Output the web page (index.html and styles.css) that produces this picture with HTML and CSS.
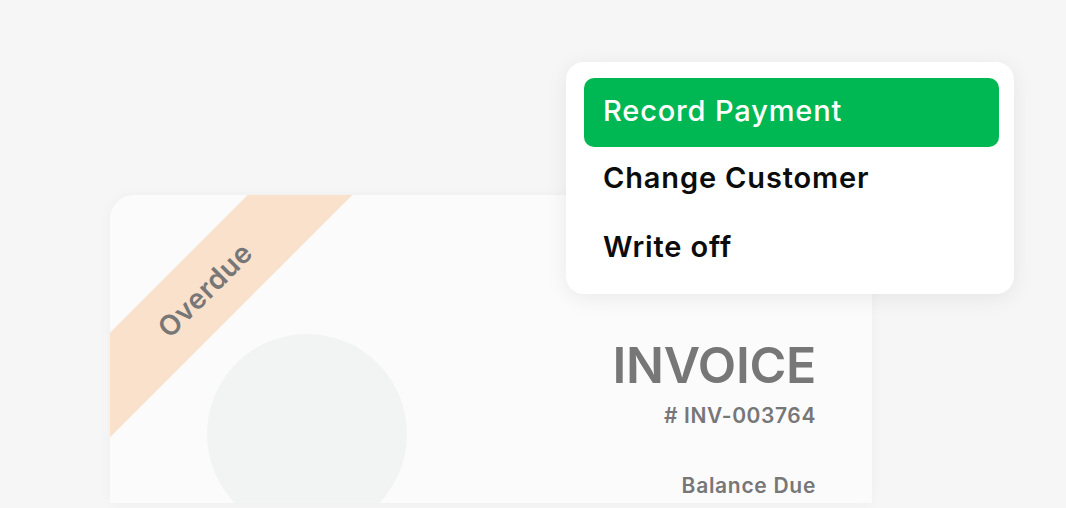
FILE: index.html
```html
<!DOCTYPE html>
<html>
<head>
<meta charset="utf-8">
<link rel="stylesheet" href="styles.css">
</head>
<body>
<div class="stage">
  <div class="card">
    <div class="ribbon"><span>Overdue</span></div>
    <div class="card-body">
      <div class="logo-circle"></div>
      <div class="invoice-meta">
        <div class="invoice-title">INVOICE</div>
        <div class="invoice-number"># INV-003764</div>
        <div class="balance-label">Balance Due</div>
      </div>
    </div>
  </div>
  <div class="menu">
    <div class="menu-item active">Record Payment</div>
    <div class="menu-item">Change Customer</div>
    <div class="menu-item">Write off</div>
  </div>
</div>
</body>
</html>
```
FILE: styles.css
```css
* { box-sizing: border-box; }
html, body {
  margin: 0;
  padding: 0;
  background: #f6f6f6;
}
body {
  width: 1066px;
  height: 508px;
  overflow: hidden;
  font-family: "Inter", "Noto Sans", sans-serif;
}
.stage {
  position: relative;
  width: 1066px;
  height: 508px;
  padding: 195px 0 0 110px;
}
.card {
  position: relative;
  width: 762px;
  height: 308px;
  background: #fbfbfb;
  border-radius: 24px 24px 0 0;
  overflow: hidden;
  box-shadow: 0 0 14px rgba(0, 0, 0, 0.035);
}
.ribbon {
  position: absolute;
  left: -155px;
  top: 58px;
  width: 500px;
  height: 74px;
  background: #f9e1cc;
  transform: rotate(-45deg);
  display: flex;
  align-items: center;
  justify-content: center;
}
.ribbon span {
  color: #777777;
  font-weight: 600;
  font-size: 28px;
  letter-spacing: 0.6px;
}
.card-body {
  display: flex;
  justify-content: space-between;
  padding: 139px 56px 0 97px;
}
.logo-circle {
  width: 200px;
  height: 200px;
  border-radius: 50%;
  background: #f2f3f3;
  flex: none;
}
.invoice-meta {
  display: flex;
  flex-direction: column;
  align-items: flex-end;
  color: #777777;
  padding-top: 1px;
}
.invoice-title {
  font-size: 50px;
  font-weight: 600;
  line-height: 60px;
  letter-spacing: -0.3px;
}
.invoice-number {
  font-size: 21px;
  font-weight: 600;
  line-height: 26px;
  margin-top: 8px;
  letter-spacing: 0.6px;
}
.balance-label {
  font-size: 21px;
  font-weight: 600;
  line-height: 26px;
  margin-top: 44px;
  letter-spacing: 0.7px;
}
.menu {
  position: absolute;
  left: 566px;
  top: 62px;
  width: 448px;
  height: 232px;
  background: #ffffff;
  border-radius: 18px;
  padding: 16px 15px 0 18px;
  box-shadow: 0 4px 22px rgba(0, 0, 0, 0.07);
}
.menu-item {
  height: 69px;
  display: flex;
  align-items: center;
  padding-left: 19px;
  padding-bottom: 8px;
  font-size: 29px;
  font-weight: 600;
  color: #0c0c0c;
  border-radius: 10px;
  letter-spacing: 0.85px;
}
.menu-item.active {
  background: #00b853;
  color: #ffffff;
  font-weight: 500;
  padding-bottom: 4px;
}
```
